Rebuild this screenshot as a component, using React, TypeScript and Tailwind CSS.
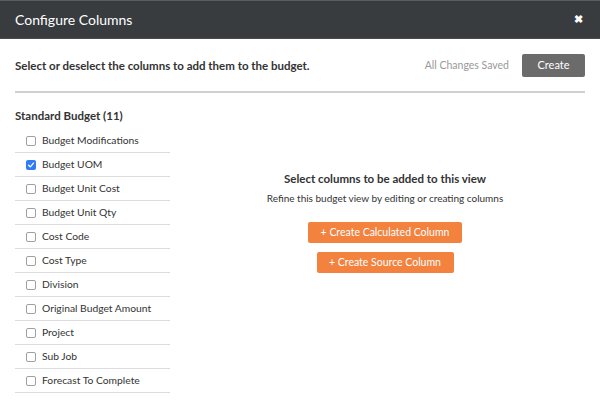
import React from "react";

const items = [
  "Budget Modifications",
  "Budget UOM",
  "Budget Unit Cost",
  "Budget Unit Qty",
  "Cost Code",
  "Cost Type",
  "Division",
  "Original Budget Amount",
  "Project",
  "Sub Job",
  "Forecast To Complete",
];

function Box({ checked }: { checked: boolean }) {
  if (checked) {
    return (
      <span className="flex h-[10px] w-[10px] items-center justify-center rounded-[2px] bg-[#2f7cf6]">
        <svg width="8" height="8" viewBox="0 0 8 8">
          <path d="M1.6 4.2 L3.3 5.9 L6.5 2.1" fill="none" stroke="#fff" strokeWidth="1.3" strokeLinecap="round" strokeLinejoin="round" />
        </svg>
      </span>
    );
  }
  return <span className="h-[10px] w-[10px] rounded-[2px] border border-[#a0a0a0] bg-white" />;
}

export default function App() {
  return (
    <div className="h-[416px] w-[600px] overflow-hidden bg-white font-['Lato',sans-serif] text-[#333]">
      <div className="flex h-[39px] items-center justify-between border-t border-t-[#5a5d60] border-b border-b-[#4a4d50] bg-[#393c3f] px-[15px]">
        <span className="text-[14px] text-white">Configure Columns</span>
        <span className="pr-[2px] text-[11px] font-bold text-white">✖</span>
      </div>
      <div className="px-[15px]">
        <div className="flex h-[23px] mt-[15px] w-full items-center justify-between">
          <span className="text-[11.5px] font-bold text-[#333]">
            Select or deselect the columns to add them to the budget.
          </span>
          <div className="flex items-center">
            <span className="mr-[13px] text-[10.5px] text-[#999]">All Changes Saved</span>
            <button className="h-[23px] w-[63px] rounded-[2px] bg-[#6b6b6b] text-[11px] text-white">Create</button>
          </div>
        </div>
        <div className="mt-[14px] h-[2px] bg-[#cfcfcf]" />
      </div>
      <div className="flex">
        <div className="w-[170px] shrink-0 pl-[15px]">
          <div className="mt-[14px] h-[18px] text-[11.5px] font-bold leading-[18px] text-[#333]">Standard Budget (11)</div>
          <div className="mt-[4px]">
            {items.map((it, i) => (
              <div key={it} className="flex h-[24px] items-center border-b border-[#dcdcdc] pl-[11px]">
                <Box checked={i === 1} />
                <span className="ml-[6px] text-[10.3px] text-[#333]">{it}</span>
              </div>
            ))}
          </div>
        </div>
        <div className="flex flex-1 flex-col items-center pt-[77px]">
          <div className="text-[11.5px] font-bold leading-[18px] text-[#333]">Select columns to be added to this view</div>
          <div className="mt-[2px] text-[10px] leading-[16px] text-[#333]">Refine this budget view by editing or creating columns</div>
          <button className="mt-[16px] h-[21px] w-[154px] rounded-[2px] bg-[#f3823f] text-[10.5px] text-white">
            + Create Calculated Column
          </button>
          <button className="mt-[9px] h-[21px] w-[137px] rounded-[2px] bg-[#f3823f] text-[10.5px] text-white">
            + Create Source Column
          </button>
        </div>
      </div>
    </div>
  );
}
